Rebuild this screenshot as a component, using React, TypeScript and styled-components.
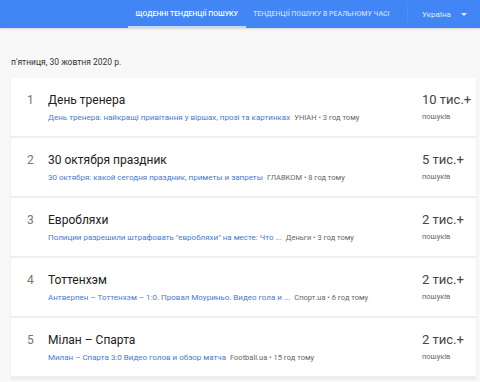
import React from "react";
import styled, { createGlobalStyle } from "styled-components";

const Global = createGlobalStyle`
  html, body { margin: 0; padding: 0; background: #f8f8f8; }
  body { font-family: Roboto, "Noto Sans", Arial, sans-serif; }
`;

const Page = styled.div`
  width: 480px;
  height: 382px;
  overflow: hidden;
  background: #f8f8f8;
`;

const Header = styled.header`
  height: 28px;
  background: #4285f4;
  display: flex;
  align-items: stretch;
  padding-left: 128px;
  box-shadow: 0 1px 2px rgba(0,0,0,0.15);
`;

const Tab = styled.div<{ $active?: boolean }>`
  display: flex;
  align-items: center;
  padding: 2px 7.5px 0;
  font-size: 7px;
  font-weight: 500;
  text-transform: uppercase;
  color: ${p => (p.$active ? "#fff" : "rgba(255,255,255,0.7)")};
  border-bottom: 2px solid ${p => (p.$active ? "#c6dafc" : "transparent")};
  box-sizing: border-box;
  white-space: nowrap;
`;

const Divider = styled.div`
  width: 1px;
  margin: 5px 0 5px 10px;
  background: rgba(255,255,255,0.08);
`;

const Geo = styled.div`
  display: flex;
  align-items: center;
  padding-left: 14px;
  gap: 10px;
  font-size: 8px;
  color: rgba(255,255,255,0.85);
  white-space: nowrap;
`;

const Caret = styled.span`
  width: 0;
  height: 0;
  border-left: 3px solid transparent;
  border-right: 3px solid transparent;
  border-top: 3px solid rgba(255,255,255,0.85);
`;

const Main = styled.main`
  padding: 28px 4px 0 11px;
`;

const DateLine = styled.div`
  font-size: 8.5px;
  color: #333;
  height: 16px;
  line-height: 12px;
  margin-bottom: 6px;
`;

const Feed = styled.div`
  display: flex;
  flex-direction: column;
  background: #fff;
  box-shadow: 0 1px 2px rgba(0,0,0,0.08);
`;

const Row = styled.div`
  height: 60px;
  box-sizing: border-box;
  display: flex;
  align-items: flex-start;
  padding-top: 14px;
  border-bottom: 2px solid #efefef;
`;

const Index = styled.div`
  width: 37px;
  padding-left: 16px;
  box-sizing: border-box;
  font-size: 12px;
  color: #757575;
  line-height: 16px;
`;

const Body = styled.div`
  flex: 1;
  min-width: 0;
  display: flex;
  flex-direction: column;
`;

const Title = styled.div`
  font-size: 12px;
  color: #212121;
  line-height: 16px;
`;

const Summary = styled.div`
  margin-top: 4px;
  font-size: 8px;
  line-height: 12px;
  white-space: nowrap;
  display: flex;
  gap: 4px;
`;

const Link = styled.span`
  color: #4a79d1;
`;

const Source = styled.span`
  color: #666;
  font-size: 7.5px;
`;

const Count = styled.div`
  width: 54px;
  flex-shrink: 0;
  display: flex;
  flex-direction: column;
  white-space: nowrap;
`;

const Value = styled.div`
  font-size: 13px;
  font-weight: 400;
  color: #444;
  line-height: 18px;
  margin-top: -1px;
`;

const Label = styled.div`
  margin-top: 3px;
  font-size: 7.5px;
  color: #666;
  line-height: 10px;
`;

const items = [
  { t: "День тренера", l: "День тренера: найкращі привітання у віршах, прозі та картинках", s: "УНІАН • 3 год тому", v: "10 тис.+" },
  { t: "30 октября праздник", l: "30 октября: какой сегодня праздник, приметы и запреты", s: "ГЛАВКОМ • 8 год тому", v: "5 тис.+" },
  { t: "Евробляхи", l: "Полиции разрешили штрафовать \"евробляхи\" на месте: Что ...", s: "Деньги • 3 год тому", v: "2 тис.+" },
  { t: "Тоттенхэм", l: "Антверпен – Тоттенхэм – 1:0. Провал Моуриньо. Видео гола и ...", s: "Спорт.ua • 6 год тому", v: "2 тис.+" },
  { t: "Мілан – Спарта", l: "Милан – Спарта 3:0 Видео голов и обзор матча", s: "Football.ua • 15 год тому", v: "2 тис.+" },
];

export default function App() {
  return (
    <Page>
      <Global />
      <Header>
        <Tab $active>Щоденні тенденції пошуку</Tab>
        <Tab>Тенденції пошуку в реальному часі</Tab>
        <Divider />
        <Geo>
          Україна <Caret />
        </Geo>
      </Header>
      <Main>
        <DateLine>п'ятниця, 30 жовтня 2020 р.</DateLine>
        <Feed>
          {items.map((it, i) => (
            <Row key={i}>
              <Index>{i + 1}</Index>
              <Body>
                <Title>{it.t}</Title>
                <Summary>
                  <Link>{it.l}</Link>
                  <Source>{it.s}</Source>
                </Summary>
              </Body>
              <Count>
                <Value>{it.v}</Value>
                <Label>пошуків</Label>
              </Count>
            </Row>
          ))}
        </Feed>
      </Main>
    </Page>
  );
}
